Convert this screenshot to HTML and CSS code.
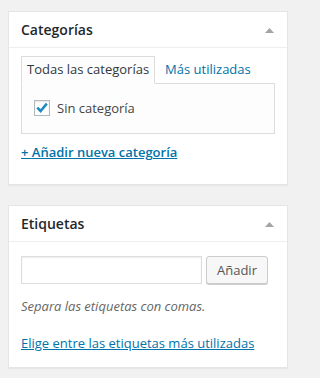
FILE: index.html
```html
<!DOCTYPE html>
<html lang="es">
<head>
<meta charset="utf-8">
<meta name="viewport" content="width=297">
<link rel="stylesheet" href="styles.css">
</head>
<body>
<div class="page">
<div class="postbox box-cats">
  <div class="hndle">
    <h2 class="title">Categorías</h2>
    <svg class="toggle" width="9" height="5" viewBox="0 0 9 5"><polygon points="0,5 4.5,0 9,5" fill="#a0a5aa"/></svg>
  </div>
  <div class="inside">
    <div class="tabs">
      <div class="tab active">Todas las categorías</div>
      <div class="tab"><a href="#" class="tablink">Más utilizadas</a></div>
    </div>
    <div class="panel">
      <div class="check-row">
        <span class="checkbox"><svg width="16" height="16" viewBox="0 0 16 16"><path d="M3.3 7.6 L6.6 11 L12.8 3.6" fill="none" stroke="#1e8cbe" stroke-width="2.6"/></svg></span>
        <span class="check-label">Sin categoría</span>
      </div>
    </div>
    <a href="#" class="add-link">+ Añadir nueva categoría</a>
  </div>
</div>
<div class="postbox box-tags">
  <div class="hndle">
    <h2 class="title">Etiquetas</h2>
    <svg class="toggle" width="9" height="5" viewBox="0 0 9 5"><polygon points="0,5 4.5,0 9,5" fill="#a0a5aa"/></svg>
  </div>
  <div class="inside">
    <div class="tag-form">
      <div class="tag-input"></div>
      <div class="button">Añadir</div>
    </div>
    <p class="howto">Separa las etiquetas con comas.</p>
    <a href="#" class="cloud-link">Elige entre las etiquetas más utilizadas</a>
  </div>
</div>
</div>
</body>
</html>
```
FILE: styles.css
```css
* { box-sizing: border-box; }
html, body { margin: 0; }
body {
  background: #f1f1f1;
  font-family: "Open Sans", "Noto Sans", sans-serif;
  font-size: 13px;
  color: #444;
}
.page {
  width: 297px;
  padding: 11px 9px 0 8px;
}
.postbox {
  background: #fff;
  border: 1px solid #e5e5e5;
  box-shadow: 0 1px 1px rgba(0,0,0,.04);
  margin-bottom: 20px;
}
.hndle {
  display: flex;
  align-items: center;
  justify-content: space-between;
  height: 36px;
  padding: 0 13px 0 12px;
  border-bottom: 1px solid #eee;
}
.title {
  margin: 0;
  font-size: 14px;
  font-weight: 600;
  color: #23282d;
  line-height: 35px;
}
.toggle { display: block; margin-top: 1px; }
.inside { padding: 0 12px; }
.box-cats .inside { padding-top: 8px; padding-bottom: 23px; }
.tabs { display: flex; gap: 4px; }
.tab {
  border: 1px solid transparent;
  padding: 3px 5px 5px;
  line-height: 18px;
  color: #444;
}
.tab.active {
  position: relative;
  border-color: #ddd;
  border-bottom-color: #fdfdfd;
  background: #fdfdfd;
  color: #32373c;
}
.tablink { color: #0073aa; text-decoration: none; }
.panel {
  margin-top: -1px;
  border: 1px solid #ddd;
  background: #fdfdfd;
  padding: 13px 12px 14px;
}
.check-row { display: flex; align-items: center; height: 22px; gap: 7px; }
.checkbox {
  width: 16px; height: 16px;
  border: 1px solid #b4b9be;
  background: #fff;
  box-shadow: inset 0 1px 2px rgba(0,0,0,.1);
  position: relative;
}
.checkbox svg { position: absolute; left: -1px; top: -1px; }
.check-label { color: #444; line-height: 22px; }
.add-link {
  display: block;
  margin-top: 9px;
  line-height: 18px;
  font-weight: 600;
  color: #0073aa;
  text-decoration: underline;
}
.box-tags .inside { padding-top: 14px; padding-bottom: 15px; }
.tag-form { display: flex; gap: 4px; }
.tag-input {
  width: 181px; height: 28px;
  border: 1px solid #ddd;
  background: #fff;
  box-shadow: inset 0 1px 2px rgba(0,0,0,.07);
}
.button {
  height: 28px;
  padding: 0 10px 1px;
  line-height: 26px;
  border: 1px solid #ccc;
  border-radius: 3px;
  background: #f7f7f7;
  box-shadow: 0 1px 0 #ccc;
  color: #555;
}
.howto {
  margin: 13px 0 0;
  line-height: 18px;
  font-style: italic;
  color: #666;
}
.cloud-link {
  display: block;
  margin-top: 19px;
  line-height: 18px;
  color: #0073aa;
  text-decoration: underline;
}
```
